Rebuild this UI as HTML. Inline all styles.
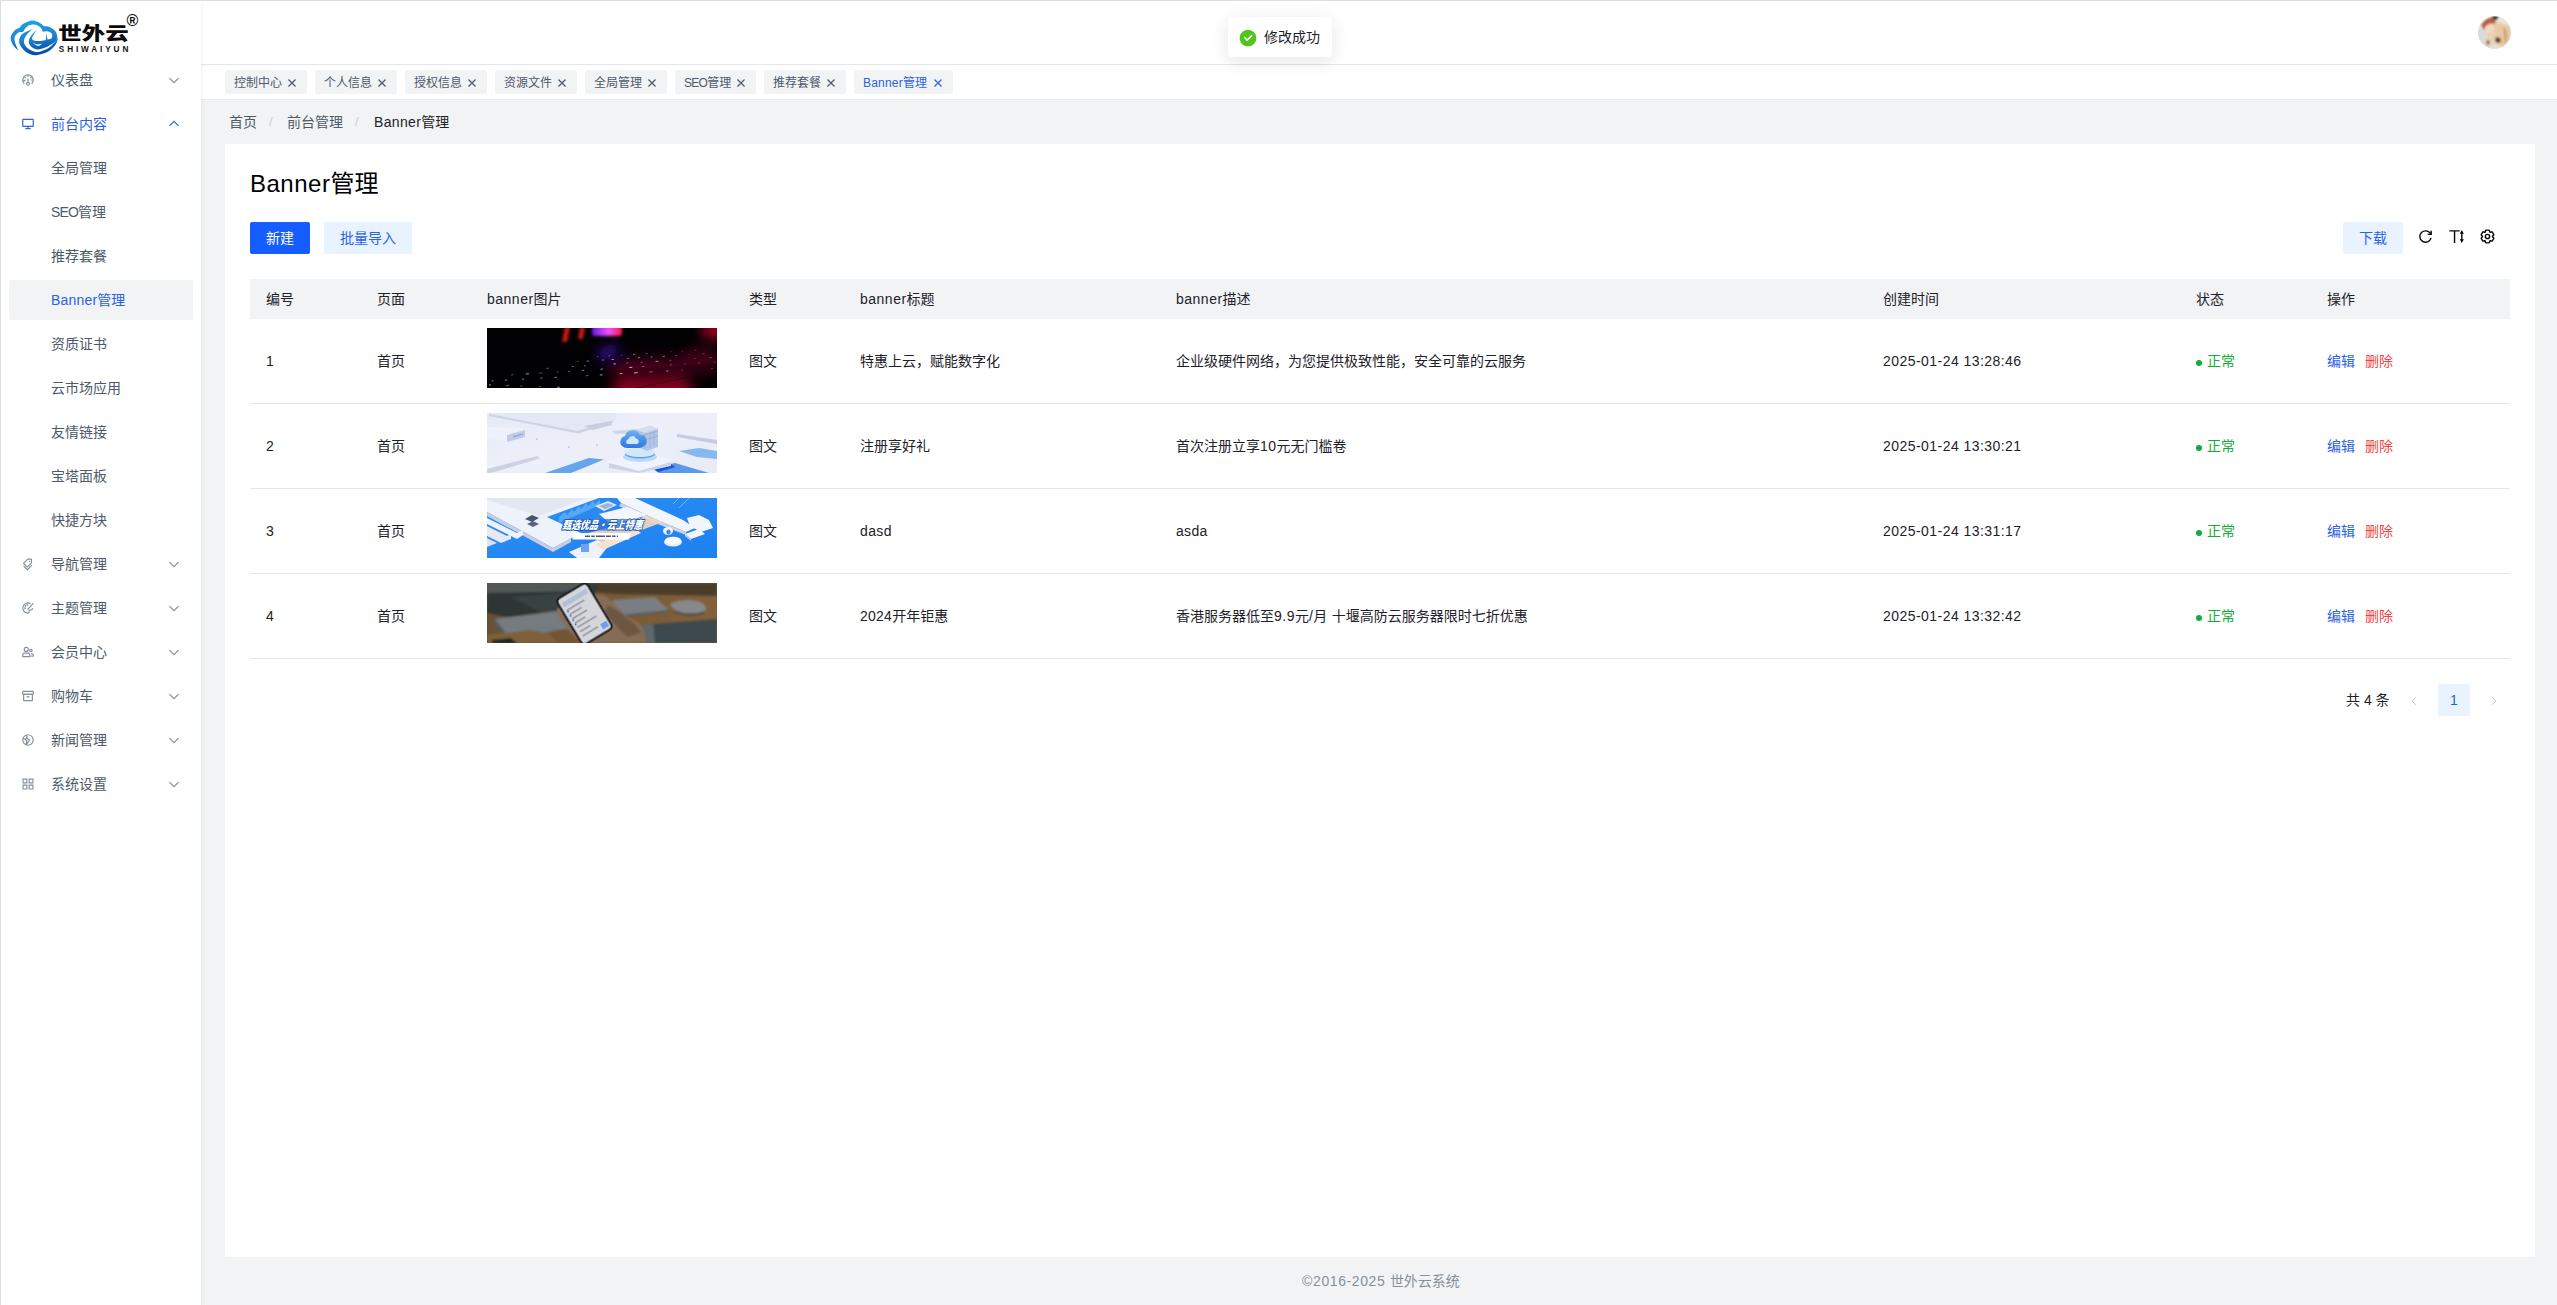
<!DOCTYPE html>
<html lang="zh-CN">
<head>
<meta charset="utf-8">
<title>Banner管理</title>
<style>
*{box-sizing:border-box;margin:0;padding:0}
html,body{width:2557px;height:1305px;overflow:hidden}
body{position:relative;background:#f2f3f5;font-family:"Liberation Sans","Noto Sans CJK SC",sans-serif;font-size:14px;color:#1d2129;line-height:22px}
.abs{position:absolute}
svg.ic{width:14px;height:14px;fill:none;stroke:currentColor;stroke-width:4;stroke-linecap:butt;stroke-linejoin:miter;display:block}
/* frame */
#btop{left:0;top:0;width:2557px;height:1px;background:#dedede;z-index:50}
#bleft{left:0;top:0;width:1px;height:1305px;background:#dedede;z-index:50}
/* sider */
#sider{left:1px;top:1px;width:200px;height:1304px;background:#fff;box-shadow:0 2px 5px rgba(0,0,0,.08);z-index:5}
.mi{position:absolute;left:8px;width:184px;height:40px;line-height:40px;border-radius:2px;color:#4e5969;font-size:14px;white-space:nowrap}
.mi .t{position:absolute;left:42px;top:0}
.mi .i{position:absolute;left:12px;top:13px;color:#86909c}
.mi .c{position:absolute;left:158px;top:13px;color:#86909c}
.mi.on{color:#2a62e4}
.mi.on .i,.mi.on .c{color:#2a62e4}
.mi.sel{background:#f2f3f5;color:#2a62e4}
/* header */
#header{left:201px;top:1px;width:2356px;height:64px;background:#fff;border-bottom:1px solid #e5e6eb}
#tabs{left:201px;top:65px;width:2356px;height:35px;background:#fff;border-bottom:1px solid #e9eaee}
.tag{position:absolute;top:5px;height:24px;line-height:25px;border:1px solid transparent;border-radius:2px;background:#f2f3f5;color:#4e5969;font-size:12px;padding:0 8px;white-space:nowrap}
.tag svg{position:absolute;right:8px;top:6px;width:12px;height:12px;stroke-width:5}
.tag.on{color:#2a62e4;background:#f2f3f5}
/* breadcrumb */
.bc{position:absolute;top:111px;height:22px;line-height:22px;font-size:14px;color:#4e5969;white-space:nowrap}
.bc.sep{color:#c9cdd4;font-size:13px}
.bc.cur{color:#1d2129}
/* card */
#card{left:225px;top:144px;width:2310px;height:1113px;background:#fff}
.btn{position:absolute;height:32px;line-height:32px;border-radius:2px;font-size:14px;text-align:center;white-space:nowrap}
.btn.pri{background:#165dff;color:#fff}
.btn.lt{background:#e8f3ff;color:#2a62e4}
#thead{left:250px;top:279px;width:2260px;height:40px;background:#f2f3f5}
.th{position:absolute;top:279px;height:40px;line-height:40px;color:#1d2129;white-space:nowrap}
.td{position:absolute;height:22px;line-height:22px;color:#1d2129;white-space:nowrap}
.rowline{position:absolute;left:250px;width:2260px;height:1px;background:#e5e6eb}
.img{position:absolute;left:487px;width:230px;height:60px;overflow:hidden}
.ok{color:#12ad38}
.ok i{position:absolute;left:0;top:10px;width:6px;height:6px;border-radius:50%;background:#12ad38}
.lk{color:#2a62e4}
.del{color:#ee4646}
#toast{left:1228px;top:17px;width:104px;height:40px;background:#fff;border-radius:4px;box-shadow:0 4px 18px rgba(0,0,0,.11);z-index:20}
svg.tb{position:absolute;top:228px;width:17px;height:17px;color:#07080a}
.ls5{letter-spacing:.5px}
.dt{letter-spacing:.45px}
</style>
</head>
<body>
<div id="btop" class="abs"></div>
<div id="bleft" class="abs"></div>
<div id="sider" class="abs">
<!--LOGO_S--><svg class="abs" style="left:4px;top:9px;width:140px;height:50px" viewBox="5 10 140 50">
<defs><linearGradient id="lg" gradientUnits="userSpaceOnUse" x1="30" y1="20" x2="36" y2="56"><stop offset="0" stop-color="#1da2e2"/><stop offset=".5" stop-color="#1b86d2"/><stop offset="1" stop-color="#0a43a2"/></linearGradient></defs>
<g fill="url(#lg)"><path d="M18.10 50.50C17.35 49.72 14.85 47.90 13.60 45.80C12.35 43.70 10.52 40.38 10.60 37.90C10.68 35.42 12.60 32.58 14.10 30.90C15.60 29.22 18.68 28.32 19.60 27.80C20.22 27.13 21.15 25.00 23.30 23.80C25.45 22.60 29.68 20.70 32.50 20.60C35.32 20.50 38.30 22.27 40.20 23.20C42.10 24.13 43.28 25.70 43.90 26.20C44.82 26.32 47.52 26.12 49.40 26.90C51.28 27.68 53.90 29.32 55.20 30.90C56.50 32.48 57.10 34.75 57.20 36.40C57.30 38.05 56.03 40.07 55.80 40.80C55.08 40.43 52.22 38.97 51.50 38.60C51.63 38.07 52.45 36.40 52.30 35.40C52.15 34.40 51.43 33.28 50.60 32.60C49.77 31.92 48.58 31.43 47.30 31.30C46.02 31.17 43.63 31.72 42.90 31.80C42.62 31.20 42.05 29.25 41.20 28.20C40.35 27.15 39.23 26.10 37.80 25.50C36.37 24.90 34.27 24.53 32.60 24.60C30.93 24.67 29.10 25.18 27.80 25.90C26.50 26.62 25.60 27.88 24.80 28.90C24.00 29.92 23.30 31.48 23.00 32.00C22.37 32.05 20.37 31.85 19.20 32.30C18.03 32.75 16.78 33.75 16.00 34.70C15.22 35.65 14.60 36.53 14.50 38.00C14.40 39.47 14.80 41.42 15.40 43.50C16.00 45.58 17.65 49.33 18.10 50.50Z"/><path d="M36.80 29.80C35.93 30.70 32.93 33.37 31.60 35.20C30.27 37.03 28.93 38.95 28.80 40.80C28.67 42.65 29.38 44.87 30.80 46.30C32.22 47.73 34.47 49.38 37.30 49.40C40.13 49.42 44.72 47.83 47.80 46.40C50.88 44.97 54.23 42.47 55.80 40.80C57.37 39.13 56.97 37.13 57.20 36.40C56.25 36.77 53.32 38.00 51.50 38.60C49.68 39.20 48.45 39.58 46.30 40.00C44.15 40.42 40.65 41.03 38.60 41.10C36.55 41.17 35.08 40.85 34.00 40.40C32.92 39.95 32.17 39.33 32.10 38.40C32.03 37.47 32.82 36.23 33.60 34.80C34.38 33.37 36.27 30.63 36.80 29.80Z"/><path d="M32.40 28.90C30.73 29.73 24.58 32.13 22.40 33.90C20.22 35.67 19.65 37.55 19.30 39.50C18.95 41.45 19.12 43.47 20.30 45.60C21.48 47.73 23.85 50.70 26.40 52.30C28.95 53.90 32.03 55.28 35.60 55.20C39.17 55.12 44.43 53.63 47.80 51.80C51.17 49.97 54.05 46.57 55.80 44.20C57.55 41.83 57.88 38.70 58.30 37.60C57.58 38.52 55.75 41.27 54.00 43.10C52.25 44.93 50.37 47.12 47.80 48.60C45.23 50.08 41.15 51.58 38.60 52.00C36.05 52.42 34.53 51.92 32.50 51.10C30.47 50.28 27.83 48.73 26.40 47.10C24.97 45.47 23.90 43.28 23.90 41.30C23.90 39.32 24.98 37.27 26.40 35.20C27.82 33.13 31.40 29.95 32.40 28.90Z"/><path d="M46.3 33.2 C46.8 36 47.3 38.5 47.6 40.2 L45.8 40.3 C46 38 46.1 36 46.3 33.2Z"/></g>
<path d="M32.50 42.80C33.25 43.05 35.32 44.18 37.00 44.30C38.68 44.42 41.67 43.63 42.60 43.50C41.83 43.92 39.68 46.12 38.00 46.00C36.32 45.88 33.42 43.33 32.50 42.80Z" fill="#d4f3ff"/>
<text x="58.300" y="39.800" font-family="'Noto Sans CJK SC','Liberation Sans',sans-serif" font-weight="900" font-size="17.800" textLength="70.500" lengthAdjust="spacingAndGlyphs" fill="#0a0a0a">世外云</text>
<text x="58.800" y="52.200" font-family="'Liberation Sans',sans-serif" font-weight="700" font-size="8.200" textLength="69.500" lengthAdjust="spacing" fill="#111">SHIWAIYUN</text>
<text x="126.400" y="26.400" font-family="'Liberation Sans',sans-serif" font-weight="700" font-size="16" fill="#111">®</text>
</svg><!--LOGO_E-->
<div class="mi " style="top:59px"><svg class="ic i" viewBox="0 0 48 48"><path d="M41.808 24c.118 4.63-1.486 9.333-5.21 13m5.21-13h-8.309m8.309 0c-.112-4.38-1.767-8.694-4.627-12M24 6c5.531 0 10.07 2.404 13.18 6M24 6c-5.724 0-10.384 2.574-13.5 6.38M24 6v7.5M37.18 12 31 17.5m-20.5-5.12L17 17.5m-6.5-5.12C6.99 16.662 5.44 22.508 6.53 28m4.872 9c-2.65-2.609-4.226-5.742-4.873-9m0 0 8.97-3.5"/><path d="M24 32a5 5 0 1 0 0 10 5 5 0 0 0 0-10Zm0 0V19"/></svg><span class="t">仪表盘</span><svg class="ic c" viewBox="0 0 48 48"><path d="M39.6 17.443 24.043 33 8.487 17.443"/></svg></div>
<div class="mi on" style="top:103px"><svg class="ic i" viewBox="0 0 48 48"><path d="M24 32v8m0 0h-9m9 0h9M7 32h34a1 1 0 0 0 1-1V9a1 1 0 0 0-1-1H7a1 1 0 0 0-1 1v22a1 1 0 0 0 1 1Z"/></svg><span class="t">前台内容</span><svg class="ic c" viewBox="0 0 48 48"><path d="M39.6 30.557 24.043 15 8.487 30.557"/></svg></div>
<div class="mi " style="top:147px"><span class="t">全局管理</span></div>
<div class="mi " style="top:191px"><span class="t"><span style="letter-spacing:-.85px">SEO</span>管理</span></div>
<div class="mi " style="top:235px"><span class="t">推荐套餐</span></div>
<div class="mi sel" style="top:279px"><span class="t"><span style="letter-spacing:.2px">Banner</span>管理</span></div>
<div class="mi " style="top:323px"><span class="t">资质证书</span></div>
<div class="mi " style="top:367px"><span class="t">云市场应用</span></div>
<div class="mi " style="top:411px"><span class="t">友情链接</span></div>
<div class="mi " style="top:455px"><span class="t">宝塔面板</span></div>
<div class="mi " style="top:499px"><span class="t">快捷方块</span></div>
<div class="mi " style="top:543px"><svg class="ic i" viewBox="0 0 48 48"><path d="M37.58 28.12 22.73 42.97a1 1 0 0 1-1.41 0L8.59 30.24"/><path d="M34.57 7.56 23.89 6.93a1 1 0 0 0-.77.3L9.3 21.05a1 1 0 0 0 0 1.42L20.6 33.78a1 1 0 0 0 1.42 0L35.85 19.95a1 1 0 0 0 .29-.76l-.63-10.69a1 1 0 0 0-.94-.94Z"/><circle cx="29" cy="15.500" r="2.300" fill="currentColor" stroke="none"/></svg><span class="t">导航管理</span><svg class="ic c" viewBox="0 0 48 48"><path d="M39.6 17.443 24.043 33 8.487 17.443"/></svg></div>
<div class="mi " style="top:587px"><svg class="ic i" viewBox="0 0 48 48"><path d="M33 9.200A17.500 17.500 0 1 0 23.500 41.500c2.800 0 4-1.600 4-4 0-2-1-3.200 0-4.800 1.800-2.800 6.500-1.200 9.500-3 1.600-1 3-2.800 3.600-5"/><path d="M22 29.500 43 7"/><circle cx="13.500" cy="25" r="1.300"/><circle cx="15.500" cy="17" r="1.300"/><circle cx="22" cy="12.500" r="1.300"/></svg><span class="t">主题管理</span><svg class="ic c" viewBox="0 0 48 48"><path d="M39.6 17.443 24.043 33 8.487 17.443"/></svg></div>
<div class="mi " style="top:631px"><svg class="ic i" viewBox="0 0 48 48"><circle cx="18" cy="15" r="7"/><circle cx="34" cy="19" r="4"/><path d="M6 34a6 6 0 0 1 6-6h12a6 6 0 0 1 6 6v6H6v-6ZM34 30h4a4 4 0 0 1 4 4v4h-8"/></svg><span class="t">会员中心</span><svg class="ic c" viewBox="0 0 48 48"><path d="M39.6 17.443 24.043 33 8.487 17.443"/></svg></div>
<div class="mi " style="top:675px"><svg class="ic i" viewBox="0 0 48 48"><rect x="9" y="18" width="30" height="22" rx="1"/><path d="M6 9a1 1 0 0 1 1-1h34a1 1 0 0 1 1 1v8a1 1 0 0 1-1 1H7a1 1 0 0 1-1-1V9ZM19 27h10"/></svg><span class="t">购物车</span><svg class="ic c" viewBox="0 0 48 48"><path d="M39.6 17.443 24.043 33 8.487 17.443"/></svg></div>
<div class="mi " style="top:719px"><svg class="ic i" viewBox="0 0 48 48"><path d="M15 21.500 6.704 19M15 21.500l4.683 5.152a1 1 0 0 1 .25.814L18 40.976l10.918-16.117a1 1 0 0 0-.298-1.409L21.500 19 15 21.500Zm0 0 6.062-6.995a1 1 0 0 0 .138-1.103L18 7.024"/><path d="M42 24c0 9.941-8.059 18-18 18S6 33.941 6 24 14.059 6 24 6s18 8.059 18 18Z"/></svg><span class="t">新闻管理</span><svg class="ic c" viewBox="0 0 48 48"><path d="M39.6 17.443 24.043 33 8.487 17.443"/></svg></div>
<div class="mi " style="top:763px"><svg class="ic i" viewBox="0 0 48 48"><path d="M7 7h13v13H7zM28 7h13v13H28zM7 28h13v13H7zM28 28h13v13H28z"/></svg><span class="t">系统设置</span><svg class="ic c" viewBox="0 0 48 48"><path d="M39.6 17.443 24.043 33 8.487 17.443"/></svg></div>
</div>
<div id="header" class="abs"></div>
<!--AV_S--><svg class="abs" style="left:2478px;top:16px;width:33px;height:33px;z-index:6" viewBox="0 0 33 33">
<defs><clipPath id="avc"><circle cx="16.500" cy="16.500" r="16.300"/></clipPath><filter id="avb" x="-20%" y="-20%" width="140%" height="140%"><feGaussianBlur stdDeviation="1.300"/></filter></defs>
<g clip-path="url(#avc)"><rect width="33" height="33" fill="#e6d2b8"/>
<g filter="url(#avb)">
<path d="M0 0 L33 0 L33 10 L20 6 L14 4 L6 10 L0 16Z" fill="#e9e6e2"/>
<path d="M3 9 Q8 0 18 1 L17 8 Q12 7 8 12 Q6 15 5 13Z" fill="#b4613c"/>
<path d="M14 0 L21 0 L19 4 L15 3Z" fill="#3a2a24"/>
<path d="M7 11 Q11 6 16 8 Q18 12 15 16 Q10 18 7 15Z" fill="#f2d6c2"/>
<path d="M0 14 L6 13 L9 20 L14 24 L12 33 L0 33Z" fill="#dcdad8"/>
<path d="M16 8 Q26 6 32 12 L33 26 Q28 32 22 31 Q18 26 17 20Z" fill="#e8c9a2"/>
<path d="M9 18 Q14 15 19 18 Q20 22 17 24 Q12 25 9 22Z" fill="#ecd0b4"/>
<path d="M17 22 Q20 20 23 23 Q23 27 20 27 Q17 26 17 22Z" fill="#5c4030"/>
<path d="M9 24 l3 1 -1 4 -3 -1z" fill="#b4502c"/>
<path d="M27 12 q3 6 1 14 l-2 0 q1 -8 -1 -13z" fill="#c99c72"/>
<path d="M12 30 Q18 27 24 31 L24 33 L12 33Z" fill="#e4e2e0"/>
</g></g></svg><!--AV_E-->
<div id="tabs" class="abs">
<div class="tag" style="left:24px;width:82px">控制中心<svg class="ic" viewBox="0 0 48 48"><path d="M9.857 9.858 24 24m0 0 14.142 14.142M24 24 38.142 9.858M24 24 9.857 38.142"/></svg></div>
<div class="tag" style="left:114px;width:82px">个人信息<svg class="ic" viewBox="0 0 48 48"><path d="M9.857 9.858 24 24m0 0 14.142 14.142M24 24 38.142 9.858M24 24 9.857 38.142"/></svg></div>
<div class="tag" style="left:204px;width:82px">授权信息<svg class="ic" viewBox="0 0 48 48"><path d="M9.857 9.858 24 24m0 0 14.142 14.142M24 24 38.142 9.858M24 24 9.857 38.142"/></svg></div>
<div class="tag" style="left:294px;width:82px">资源文件<svg class="ic" viewBox="0 0 48 48"><path d="M9.857 9.858 24 24m0 0 14.142 14.142M24 24 38.142 9.858M24 24 9.857 38.142"/></svg></div>
<div class="tag" style="left:384px;width:82px">全局管理<svg class="ic" viewBox="0 0 48 48"><path d="M9.857 9.858 24 24m0 0 14.142 14.142M24 24 38.142 9.858M24 24 9.857 38.142"/></svg></div>
<div class="tag" style="left:474px;width:81px"><span style="letter-spacing:-.7px">SEO</span>管理<svg class="ic" viewBox="0 0 48 48"><path d="M9.857 9.858 24 24m0 0 14.142 14.142M24 24 38.142 9.858M24 24 9.857 38.142"/></svg></div>
<div class="tag" style="left:563px;width:82px">推荐套餐<svg class="ic" viewBox="0 0 48 48"><path d="M9.857 9.858 24 24m0 0 14.142 14.142M24 24 38.142 9.858M24 24 9.857 38.142"/></svg></div>
<div class="tag on" style="left:653px;width:99px"><span style="letter-spacing:.2px">Banner</span>管理<svg class="ic" viewBox="0 0 48 48"><path d="M9.857 9.858 24 24m0 0 14.142 14.142M24 24 38.142 9.858M24 24 9.857 38.142"/></svg></div>
</div>
<div class="bc" style="left:229px">首页</div>
<div class="bc sep" style="left:269px">/</div>
<div class="bc" style="left:287px">前台管理</div>
<div class="bc sep" style="left:355px">/</div>
<div class="bc cur" style="left:374px"><span style="letter-spacing:.35px">Banner</span>管理</div>
<div id="card" class="abs"></div>
<h1 class="abs" id="title" style="left:250px;top:167px;font-size:24px;line-height:34px;font-weight:400;color:#000;white-space:nowrap"><span style="letter-spacing:.5px">Banner</span>管理</h1>
<div class="btn pri" style="left:250px;top:222px;width:60px">新建</div>
<div class="btn lt" style="left:324px;top:222px;width:88px">批量导入</div>
<div class="btn lt" style="left:2343px;top:222px;width:60px">下载</div>
<svg class="ic tb" style="left:2417px" viewBox="0 0 48 48"><path d="M38.837 18C36.463 12.136 30.715 8 24 8 15.163 8 8 15.163 8 24s7.163 16 16 16c7.455 0 13.72-5.1 15.496-12M40 8v10H30"/></svg>
<svg class="ic tb" style="left:2448px" viewBox="0 0 48 48"><path d="M4 8h29M18.500 8v34M39 13v22"/><path d="M39 5.500l5.800 10.500h-11.600zM39 42.500l5.800-10.500h-11.600z" fill="currentColor" stroke="none"/></svg>
<svg class="ic tb" style="left:2479px" viewBox="0 0 48 48"><path d="M18.797 6.732A1 1 0 0 1 19.76 6h8.48a1 1 0 0 1 .964.732l1.285 4.628a1 1 0 0 0 1.213.7l4.651-1.2a1 1 0 0 1 1.116.468l4.24 7.344a1 1 0 0 1-.153 1.2L38.193 23.3a1 1 0 0 0 0 1.402l3.364 3.427a1 1 0 0 1 .153 1.2l-4.24 7.344a1 1 0 0 1-1.116.468l-4.65-1.2a1 1 0 0 0-1.214.7l-1.285 4.628a1 1 0 0 1-.964.732h-8.48a1 1 0 0 1-.963-.732L17.51 36.64a1 1 0 0 0-1.213-.7l-4.65 1.2a1 1 0 0 1-1.116-.468l-4.24-7.344a1 1 0 0 1 .153-1.2L9.809 24.7a1 1 0 0 0 0-1.402l-3.364-3.427a1 1 0 0 1-.153-1.2l4.24-7.344a1 1 0 0 1 1.116-.468l4.65 1.2a1 1 0 0 0 1.213-.7l1.286-4.628Z"/><path d="M30 24a6 6 0 1 1-12 0 6 6 0 0 1 12 0Z"/></svg>
<div id="thead" class="abs"></div>
<div class="th" style="left:266px">编号</div>
<div class="th" style="left:377px">页面</div>
<div class="th" style="left:487px"><span class="ls5">banner</span>图片</div>
<div class="th" style="left:749px">类型</div>
<div class="th" style="left:860px"><span class="ls5">banner</span>标题</div>
<div class="th" style="left:1176px"><span class="ls5">banner</span>描述</div>
<div class="th" style="left:1883px">创建时间</div>
<div class="th" style="left:2196px">状态</div>
<div class="th" style="left:2327px">操作</div>
<div class="td" style="left:266px;top:350px">1</div>
<div class="td" style="left:377px;top:350px">首页</div>
<div class="img" style="top:328px"><!--IMG1S--><svg width="230" height="60" viewBox="0 0 230 60" style="display:block">
<defs><filter id="b1" x="-30%" y="-30%" width="160%" height="160%"><feGaussianBlur stdDeviation="1.6"/></filter><filter id="b2" x="-30%" y="-30%" width="160%" height="160%"><feGaussianBlur stdDeviation="6"/></filter><filter id="b3"><feGaussianBlur stdDeviation=".45"/></filter>
<linearGradient id="pg" x1="0" y1="0" x2="1" y2="0"><stop offset="0" stop-color="#6a18e8"/><stop offset=".55" stop-color="#f050ff"/><stop offset="1" stop-color="#ff1840"/></linearGradient></defs>
<rect width="230" height="60" fill="#020103"/>
<g filter="url(#b2)"><ellipse cx="165" cy="64" rx="42" ry="17" fill="#b8052a"/><ellipse cx="228" cy="2" rx="14" ry="9" fill="#a00424"/><ellipse cx="165" cy="42" rx="45" ry="12" fill="#48061f"/><ellipse cx="121" cy="24" rx="12" ry="4" fill="#4a14c8" transform="rotate(-18 121 24)"/><ellipse cx="212" cy="34" rx="22" ry="14" fill="#3c0316"/></g>
<g filter="url(#b1)"><rect x="105" y="-3" width="30" height="11" rx="3" fill="url(#pg)"/><path d="M78 -1 L83 -1 L80 14 L75 14Z" fill="#d01414"/><path d="M93 -1 L98 -1 L96 11 L91 11Z" fill="#c81212"/></g>
<path d="M0 50 L230 36 L230 60 L0 60Z" fill="#000" opacity=".25"/>
<g filter="url(#b3)"><rect x="2.0" y="56.5" width="2.0" height="1.1" fill="#6fc6d6" opacity="0.78" transform="rotate(-5 2.0 56.5)"/><rect x="19.0" y="57.1" width="2.9" height="1.1" fill="#6fc6d6" opacity="0.48" transform="rotate(-5 19.0 57.1)"/><rect x="33.4" y="57.6" width="2.0" height="1.1" fill="#6fc6d6" opacity="0.48" transform="rotate(-5 33.4 57.6)"/><rect x="52.2" y="58.2" width="2.3" height="1.1" fill="#6fc6d6" opacity="0.51" transform="rotate(-5 52.2 58.2)"/><rect x="70.1" y="58.8" width="2.6" height="1.1" fill="#6fc6d6" opacity="0.74" transform="rotate(-5 70.1 58.8)"/><rect x="105.0" y="60.0" width="2.1" height="1.1" fill="#aab8e6" opacity="0.52" transform="rotate(-5 105.0 60.0)"/><rect x="119.0" y="60.5" width="3.0" height="1.1" fill="#f0c0e0" opacity="0.54" transform="rotate(-5 119.0 60.5)"/><rect x="4.7" y="52.5" width="1.8" height="1.0" fill="#6fc6d6" opacity="0.72" transform="rotate(-5 4.7 52.5)"/><rect x="17.8" y="51.7" width="2.5" height="1.0" fill="#6fc6d6" opacity="0.79" transform="rotate(-5 17.8 51.7)"/><rect x="34.8" y="50.8" width="2.3" height="1.0" fill="#6fc6d6" opacity="0.68" transform="rotate(-5 34.8 50.8)"/><rect x="53.0" y="49.7" width="2.8" height="1.0" fill="#6fc6d6" opacity="0.57" transform="rotate(-5 53.0 49.7)"/><rect x="67.5" y="48.9" width="2.2" height="1.0" fill="#6fc6d6" opacity="0.81" transform="rotate(-5 67.5 48.9)"/><rect x="98.8" y="47.2" width="2.6" height="1.0" fill="#aab8e6" opacity="0.53" transform="rotate(-5 98.8 47.2)"/><rect x="112.8" y="46.4" width="2.8" height="1.0" fill="#aab8e6" opacity="0.83" transform="rotate(-5 112.8 46.4)"/><rect x="132.6" y="45.3" width="2.8" height="1.0" fill="#f0c0e0" opacity="0.80" transform="rotate(-5 132.6 45.3)"/><rect x="147.1" y="44.4" width="3.5" height="1.0" fill="#f0c0e0" opacity="0.87" transform="rotate(-5 147.1 44.4)"/><rect x="162.4" y="43.6" width="3.0" height="1.0" fill="#f0c0e0" opacity="0.48" transform="rotate(-5 162.4 43.6)"/><rect x="179.1" y="42.6" width="2.2" height="1.0" fill="#e08aa0" opacity="0.86" transform="rotate(-5 179.1 42.6)"/><rect x="193.7" y="41.8" width="2.6" height="1.0" fill="#e08aa0" opacity="0.28" transform="rotate(-5 193.7 41.8)"/><rect x="223.9" y="40.1" width="2.2" height="1.0" fill="#e08aa0" opacity="0.31" transform="rotate(-5 223.9 40.1)"/><rect x="24.0" y="46.5" width="2.3" height="0.9" fill="#6fc6d6" opacity="0.49" transform="rotate(-5 24.0 46.5)"/><rect x="38.8" y="45.6" width="3.1" height="0.9" fill="#6fc6d6" opacity="0.86" transform="rotate(-5 38.8 45.6)"/><rect x="52.2" y="44.7" width="3.1" height="0.9" fill="#6fc6d6" opacity="0.63" transform="rotate(-5 52.2 44.7)"/><rect x="69.7" y="43.6" width="1.9" height="0.9" fill="#6fc6d6" opacity="0.54" transform="rotate(-5 69.7 43.6)"/><rect x="81.1" y="42.9" width="2.0" height="0.9" fill="#aab8e6" opacity="0.74" transform="rotate(-5 81.1 42.9)"/><rect x="94.7" y="42.0" width="2.5" height="0.9" fill="#aab8e6" opacity="0.63" transform="rotate(-5 94.7 42.0)"/><rect x="113.4" y="40.8" width="2.6" height="0.9" fill="#aab8e6" opacity="0.71" transform="rotate(-5 113.4 40.8)"/><rect x="142.3" y="39.0" width="2.9" height="0.9" fill="#f0c0e0" opacity="0.89" transform="rotate(-5 142.3 39.0)"/><rect x="154.7" y="38.2" width="2.7" height="0.9" fill="#f0c0e0" opacity="0.50" transform="rotate(-5 154.7 38.2)"/><rect x="183.0" y="36.4" width="1.6" height="0.9" fill="#e08aa0" opacity="0.62" transform="rotate(-5 183.0 36.4)"/><rect x="196.7" y="35.5" width="2.2" height="0.9" fill="#e08aa0" opacity="0.30" transform="rotate(-5 196.7 35.5)"/><rect x="211.4" y="34.6" width="1.8" height="0.9" fill="#e08aa0" opacity="0.45" transform="rotate(-5 211.4 34.6)"/><rect x="226.9" y="33.6" width="1.8" height="0.9" fill="#e08aa0" opacity="0.38" transform="rotate(-5 226.9 33.6)"/><rect x="59.4" y="39.9" width="2.2" height="0.8" fill="#6fc6d6" opacity="0.68" transform="rotate(-5 59.4 39.9)"/><rect x="84.7" y="38.3" width="1.7" height="0.8" fill="#aab8e6" opacity="0.86" transform="rotate(-5 84.7 38.3)"/><rect x="97.0" y="37.5" width="1.6" height="0.8" fill="#aab8e6" opacity="0.71" transform="rotate(-5 97.0 37.5)"/><rect x="126.4" y="35.6" width="2.5" height="0.8" fill="#f0c0e0" opacity="0.88" transform="rotate(-5 126.4 35.6)"/><rect x="139.0" y="34.8" width="2.6" height="0.8" fill="#f0c0e0" opacity="0.53" transform="rotate(-5 139.0 34.8)"/><rect x="153.8" y="33.9" width="1.8" height="0.8" fill="#f0c0e0" opacity="0.61" transform="rotate(-5 153.8 33.9)"/><rect x="168.6" y="32.9" width="2.7" height="0.8" fill="#f0c0e0" opacity="0.88" transform="rotate(-5 168.6 32.9)"/><rect x="182.3" y="32.0" width="2.2" height="0.8" fill="#e08aa0" opacity="0.56" transform="rotate(-5 182.3 32.0)"/><rect x="206.4" y="30.5" width="2.5" height="0.8" fill="#e08aa0" opacity="0.35" transform="rotate(-5 206.4 30.5)"/><rect x="222.0" y="29.5" width="3.0" height="0.8" fill="#e08aa0" opacity="0.55" transform="rotate(-5 222.0 29.5)"/><rect x="89.7" y="33.4" width="1.6" height="0.7" fill="#aab8e6" opacity="0.56" transform="rotate(-5 89.7 33.4)"/><rect x="99.5" y="32.8" width="2.6" height="0.7" fill="#aab8e6" opacity="0.76" transform="rotate(-5 99.5 32.8)"/><rect x="114.7" y="31.8" width="2.4" height="0.7" fill="#aab8e6" opacity="0.78" transform="rotate(-5 114.7 31.8)"/><rect x="124.5" y="31.2" width="2.4" height="0.7" fill="#f0c0e0" opacity="0.90" transform="rotate(-5 124.5 31.2)"/><rect x="139.8" y="30.2" width="2.4" height="0.7" fill="#f0c0e0" opacity="0.54" transform="rotate(-5 139.8 30.2)"/><rect x="150.9" y="29.5" width="1.8" height="0.7" fill="#f0c0e0" opacity="0.94" transform="rotate(-5 150.9 29.5)"/><rect x="163.8" y="28.7" width="1.5" height="0.7" fill="#f0c0e0" opacity="0.81" transform="rotate(-5 163.8 28.7)"/><rect x="175.5" y="28.0" width="2.4" height="0.7" fill="#e08aa0" opacity="0.90" transform="rotate(-5 175.5 28.0)"/><rect x="188.3" y="27.2" width="2.2" height="0.7" fill="#e08aa0" opacity="0.56" transform="rotate(-5 188.3 27.2)"/><rect x="201.7" y="26.3" width="1.3" height="0.7" fill="#e08aa0" opacity="0.31" transform="rotate(-5 201.7 26.3)"/><rect x="215.0" y="25.5" width="2.6" height="0.7" fill="#e08aa0" opacity="0.43" transform="rotate(-5 215.0 25.5)"/><rect x="110.0" y="28.5" width="1.3" height="0.6" fill="#aab8e6" opacity="0.86" transform="rotate(-5 110.0 28.5)"/><rect x="121.3" y="27.7" width="1.8" height="0.6" fill="#f0c0e0" opacity="0.57" transform="rotate(-5 121.3 27.7)"/><rect x="133.6" y="26.9" width="2.1" height="0.6" fill="#f0c0e0" opacity="0.52" transform="rotate(-5 133.6 26.9)"/><rect x="146.2" y="26.1" width="2.1" height="0.6" fill="#f0c0e0" opacity="0.74" transform="rotate(-5 146.2 26.1)"/><rect x="158.7" y="25.3" width="1.7" height="0.6" fill="#f0c0e0" opacity="0.70" transform="rotate(-5 158.7 25.3)"/><rect x="183.3" y="23.6" width="2.0" height="0.6" fill="#e08aa0" opacity="0.45" transform="rotate(-5 183.3 23.6)"/><rect x="194.5" y="22.9" width="1.7" height="0.6" fill="#e08aa0" opacity="0.49" transform="rotate(-5 194.5 22.9)"/><rect x="207.4" y="22.0" width="2.0" height="0.6" fill="#e08aa0" opacity="0.44" transform="rotate(-5 207.4 22.0)"/></g>
<path d="M150 60 L230 43" stroke="#30020c" stroke-width="1" opacity=".8"/>
</svg><!--IMG1E--></div>
<div class="td" style="left:749px;top:350px">图文</div>
<div class="td" style="left:860px;top:350px">特惠上云，赋能数字化</div>
<div class="td" style="left:1176px;top:350px">企业级硬件网络，为您提供极致性能，安全可靠的云服务</div>
<div class="td" style="left:1883px;top:350px"><span class="dt">2025-01-24 13:28:46</span></div>
<div class="td ok" style="left:2196px;top:350px;padding-left:11px"><i></i>正常</div>
<div class="td lk" style="left:2327px;top:350px">编辑</div>
<div class="td del" style="left:2365px;top:350px">删除</div>
<div class="rowline" style="top:403px"></div>
<div class="td" style="left:266px;top:435px">2</div>
<div class="td" style="left:377px;top:435px">首页</div>
<div class="img" style="top:413px"><!--IMG2S--><svg width="230" height="60" viewBox="0 0 230 60" style="display:block">
<defs><linearGradient id="g2" x1="0" y1="0" x2="1" y2="1"><stop offset="0" stop-color="#e6eaf6"/><stop offset=".5" stop-color="#edf0f9"/><stop offset="1" stop-color="#e6ebf7"/></linearGradient><filter id="b4"><feGaussianBlur stdDeviation=".5"/></filter>
<linearGradient id="cl" x1="0" y1="0" x2="0" y2="1"><stop offset="0" stop-color="#6fb0f2"/><stop offset="1" stop-color="#2a78e0"/></linearGradient></defs>
<rect width="230" height="60" fill="url(#g2)"/>
<g filter="url(#b4)">
<path d="M0 0 L130 0 L128 8 L92 19 L0 1Z" fill="#e4e8f4"/>
<path d="M2 1 L90 18 L126 8 L126 9.500 L91 20.500 L2 3Z" fill="#cdd3e5"/>
<path d="M97 13 L124 8 L125 12 L106 17Z" fill="#c8cee2"/>
<path d="M0 14 L36 15 L38 23 L20 29 L0 25Z" fill="#eef1fa"/>
<path d="M20 22 L38 17 L38 24 L20 29Z" fill="#c4cbe2"/>
<path d="M26 24 L36 21" stroke="#8fb0ec" stroke-width="1.500"/>
<path d="M0 56 L50 43 L53 45.500 L4 60 L0 60Z" fill="#ccd2e4"/>
<path d="M58 60 L102 45 L117 46.500 L84 60Z" fill="#66a4ec"/>
<path d="M190 15 L230 17 L230 28 L190 22Z" fill="#eceff9"/>
<path d="M190 21 L230 27 L230 31 L190 24Z" fill="#c5cbe0"/>
<path d="M125 18 L150 16 L150 20 L128 21Z" fill="#d0d5e8"/>
<path d="M192 38 L212 35 L230 38 L230 46 L210 44Z" fill="#86b8f0"/>
<path d="M165 55 L188 50 L222 60 L172 60Z" fill="#5a98ea"/>
<path d="M165 55 L184 51 L188 54 L171 59Z" fill="#1c50d6"/>
<path d="M122 48 L152 38 L184 46 L184 52 L152 60 L122 54Z" fill="#f0f3fb"/>
<path d="M122 50 L152 58 L184 49 L184 53 L152 60 L122 55Z" fill="#cdd4e8"/>
<ellipse cx="153" cy="44" rx="17" ry="5" fill="#bcd9f8"/>
<ellipse cx="153" cy="41" rx="15" ry="4.500" fill="#5da2ee"/>
<ellipse cx="153" cy="39.500" rx="15" ry="4.500" fill="#d5e8fb"/>
<path d="M149 17 L163 13 L171 16 L171 34 L160 38 L149 33Z" fill="#b4c6e6"/>
<path d="M149 17 L163 13 L171 16 L158 20Z" fill="#d2ddf2"/>
<path d="M153 21v14M158 22v14M163 20v15M167 18v15M150 24l21-6M150 29l21-6" stroke="#8fa9d8" stroke-width=".7" fill="none"/>
<path d="M135 33 a6 6 0 0 1 3-10 a8 8 0 0 1 15-1 a6 6 0 0 1 4 11 q-2 2-6 2 h-11 q-3 0-5-2Z" fill="url(#cl)"/>
<path d="M140 31 a3 3 0 0 1 1.500-5 a4 4 0 0 1 7.500-.5 a3 3 0 0 1 1.500 5.500 z" fill="#cfe6fc"/>
</g>
<circle cx="50" cy="26" r=".8" fill="#7ab0ee"/><circle cx="82" cy="34" r=".8" fill="#7ab0ee"/><circle cx="110" cy="32" r=".8" fill="#7ab0ee"/>
</svg><!--IMG2E--></div>
<div class="td" style="left:749px;top:435px">图文</div>
<div class="td" style="left:860px;top:435px">注册享好礼</div>
<div class="td" style="left:1176px;top:435px">首次注册立享<span class="ls5">10</span>元无门槛卷</div>
<div class="td" style="left:1883px;top:435px"><span class="dt">2025-01-24 13:30:21</span></div>
<div class="td ok" style="left:2196px;top:435px;padding-left:11px"><i></i>正常</div>
<div class="td lk" style="left:2327px;top:435px">编辑</div>
<div class="td del" style="left:2365px;top:435px">删除</div>
<div class="rowline" style="top:488px"></div>
<div class="td" style="left:266px;top:520px">3</div>
<div class="td" style="left:377px;top:520px">首页</div>
<div class="img" style="top:498px"><!--IMG3S--><svg width="230" height="60" viewBox="0 0 230 60" style="display:block">
<defs><linearGradient id="g3" x1="0" y1="0" x2="1" y2="1"><stop offset="0" stop-color="#2f90f4"/><stop offset="1" stop-color="#1c80f0"/></linearGradient><filter id="b5"><feGaussianBlur stdDeviation=".6"/></filter></defs>
<rect width="230" height="60" fill="url(#g3)"/>
<g filter="url(#b5)">
<path d="M0 0 L112 0 L60 19 L94 35 L66 50 L0 14Z" fill="#eef2fa"/>
<path d="M0 0 L100 0 L52 18 L0 2Z" fill="#e3e7f2"/>
<path d="M0 14 L66 50 L84 40 L84 44 L66 54 L0 18Z" fill="#c6cee4"/>
<path d="M0 20 L30 35 L36 32 L36 37 L30 41 L0 26Z" fill="#eef2fa"/>
<path d="M0 28 L20 38 L24 36 L24 41 L14 45 L0 38Z" fill="#e6eaf6"/>
<path d="M0 40 L10 45 L0 49Z" fill="#dde3f2"/>
<path d="M38 21 L45 17 L52 20 L45 24Z" fill="#4a5468"/><path d="M40 26 L46 23 L52 26 L46 29Z" fill="#5a6680"/>
<path d="M68 20 L108 4 L112 0 L150 0 L120 14 L95 30Z" fill="#2c8af0"/>
<path d="M72 19 l6-5 2 3 5-6 2 3 5-6 2 3 5-6 2 3 5-5 2 3 5-5 v6 l-41 18z" fill="#63aef6" opacity=".8"/>
<path d="M108 8 L121 3 L130 7 L117 13Z" fill="#dfe6f4"/><path d="M112 8 L121 5 L127 7.500 L118 11Z" fill="#9fb4d6"/>
<path d="M130 0 L148 0 L196 22 L208 30 L199 34 L170 22 L134 5Z" fill="#f2f5fc"/>
<path d="M134 5 L170 22 L199 34 L199 37 L168 25 L132 8Z" fill="#c9d3ea"/>
<path d="M112 16 L140 9 L160 17 L126 28Z" fill="#f4f6fc"/>
<path d="M98 36 L160 18 L176 24 L118 46Z" fill="#f3d6c0" opacity=".9"/>
<path d="M82 54 L110 42 L122 47 L112 60 L90 60Z" fill="#eef2fa"/><path d="M94 46 h8 v8 h-8z" fill="#6aa2ee"/>
<path d="M108 46 L150 32 L154 35 L116 52Z" fill="#f6e2d2"/>
<path d="M200 20 L212 17 L222 22 L226 30 L214 34 L203 28Z" fill="#f2f5fc"/>
<path d="M198 36 L212 31 L218 36 L204 41Z" fill="#f2f5fc"/><path d="M198 36 L204 41 L204 43 L198 38Z" fill="#c6d0e6"/>
<ellipse cx="186" cy="44" rx="9" ry="4.500" fill="#e9eef8"/><ellipse cx="186" cy="42.500" rx="8" ry="3.800" fill="#fbfcff"/>
<ellipse cx="181" cy="33" rx="5" ry="4" fill="#f2f5fc"/><ellipse cx="181.500" cy="34" rx="2.200" ry="2.500" fill="#3b86e8"/>
<path d="M186 6 l6-6 M192 10 l10-10" stroke="#8cc4fa" stroke-width="1" opacity=".7"/>
</g>
<path d="M77 21 L158 21 L155 32.500 L74 32.500Z" fill="#2b74dc" opacity=".75"/>
<rect x="86" y="35" width="57" height="6.500" rx="1" fill="#fff" transform="skewX(-12)" style="transform-origin:114px 38px"/>
<path d="M98 38.300h33" stroke="#2a3a5e" stroke-width="1.600" stroke-dasharray="5 1.200 3.500 1.200 9 1" opacity=".85"/>
<text x="115.500" y="31.200" text-anchor="middle" font-family="'Noto Sans CJK SC','Liberation Sans',sans-serif" font-size="11.200" font-weight="900" font-style="italic" fill="#fff" stroke="#1c55b4" stroke-width="1.700" paint-order="stroke" stroke-linejoin="round" textLength="80" lengthAdjust="spacingAndGlyphs" transform="skewX(-8)" style="transform-origin:115px 28px">甄选优品·云上特惠</text>
</svg><!--IMG3E--></div>
<div class="td" style="left:749px;top:520px">图文</div>
<div class="td" style="left:860px;top:520px"><span style="letter-spacing:.4px">dasd</span></div>
<div class="td" style="left:1176px;top:520px"><span style="letter-spacing:.3px">asda</span></div>
<div class="td" style="left:1883px;top:520px"><span class="dt">2025-01-24 13:31:17</span></div>
<div class="td ok" style="left:2196px;top:520px;padding-left:11px"><i></i>正常</div>
<div class="td lk" style="left:2327px;top:520px">编辑</div>
<div class="td del" style="left:2365px;top:520px">删除</div>
<div class="rowline" style="top:573px"></div>
<div class="td" style="left:266px;top:605px">4</div>
<div class="td" style="left:377px;top:605px">首页</div>
<div class="img" style="top:583px"><!--IMG4S--><svg width="230" height="60" viewBox="0 0 230 60" style="display:block">
<defs><linearGradient id="g4" x1="0" y1="0" x2="1" y2="0"><stop offset="0" stop-color="#9a7040"/><stop offset=".5" stop-color="#b07c46"/><stop offset="1" stop-color="#c08a4c"/></linearGradient><filter id="b6"><feGaussianBlur stdDeviation=".8"/></filter><filter id="b7"><feGaussianBlur stdDeviation=".35"/></filter></defs>
<rect width="230" height="60" fill="url(#g4)"/>
<g filter="url(#b6)">
<path d="M0 0 L230 0 L230 13 L130 11 L100 9 L0 10Z" fill="#6a5236"/><path d="M0 0 L112 0 L108 10 L0 10Z" fill="#4a4e4c"/>
<path d="M0 0 L100 0 L100 9 L0 10Z" fill="#767a7a"/>
<path d="M0 10 L96 8 L110 12 L86 30 L20 34 L0 30Z" fill="#3c4442"/>
<path d="M24 14 L84 10 L90 26 L60 32Z" fill="#505a58"/>
<path d="M8 36 L86 26 L112 40 L44 52 L20 52Z" fill="#aeb2b8"/>
<path d="M8 36 L20 52 L44 52 L46 54 L18 55 L5 38Z" fill="#7c8088"/>
<path d="M125 17 L168 14 L182 27 L134 32Z" fill="#b4b8bc"/>
<path d="M134 32 L182 27 L182 29 L135 34Z" fill="#7e8288"/>
<path d="M184 20 Q196 15 210 18 Q222 22 218 28 Q204 33 190 28 Q182 24 184 20Z" fill="#c6c9cc"/>
<path d="M186 27 Q204 34 218 28 L218 30 Q204 36 187 29Z" fill="#70665a"/>
<path d="M0 52 L44 47 L62 50 L70 60 L0 60Z" fill="#b98a50"/>
<path d="M4 57 L24 55 L30 60 L6 60Z" fill="#2a2a2a"/>
<path d="M156 42 L230 36 L230 60 L158 60Z" fill="#56656c"/>
<path d="M156 42 L166 41 L168 60 L158 60Z" fill="#8a949a"/>
<path d="M106 12 Q118 10 124 18 L140 34 Q160 40 158 60 L96 60 Q82 50 78 42 L70 30 Q72 26 80 28 L92 40 Z" fill="#c89c76"/>
<path d="M70 27 Q72 23 78 24 L84 30 L76 32Z" fill="#d2a882"/>
<path d="M120 22 Q132 26 138 34 Q150 40 154 50 L140 54 Q126 40 118 30Z" fill="#a27a58"/>
</g>
<rect width="230" height="60" fill="#14181c" opacity=".36"/>
<g filter="url(#b7)" transform="rotate(-31 97 30)">
<rect x="78.500" y="3.500" width="37" height="55" rx="5" fill="#15171a"/>
<rect x="80.500" y="5.500" width="33" height="51" rx="3.500" fill="#d4d6da"/>
<rect x="83" y="10" width="28" height="5" fill="#b4c0d8"/>
<path d="M84 19h20M84 24h14M84 29h17M84 34h12M84 39h22M84 44h12M84 49h18" stroke="#6a7282" stroke-width="1"/>
<path d="M83 20.500h2M83 25.500h2M83 30.500h2M83 35.500h2" stroke="#3a66d8" stroke-width="1.400"/>
<rect x="105" y="48" width="7" height="6" fill="#6aa0ee"/>
</g>
</svg><!--IMG4E--></div>
<div class="td" style="left:749px;top:605px">图文</div>
<div class="td" style="left:860px;top:605px"><span style="letter-spacing:.25px">2024</span>开年钜惠</div>
<div class="td" style="left:1176px;top:605px">香港服务器低至<span class="ls5">9.9</span>元<span class="ls5">/</span>月<span class="ls5"> </span>十堰高防云服务器限时七折优惠</div>
<div class="td" style="left:1883px;top:605px"><span class="dt">2025-01-24 13:32:42</span></div>
<div class="td ok" style="left:2196px;top:605px;padding-left:11px"><i></i>正常</div>
<div class="td lk" style="left:2327px;top:605px">编辑</div>
<div class="td del" style="left:2365px;top:605px">删除</div>
<div class="rowline" style="top:658px"></div>
<div class="td" style="left:2346px;top:689px">共 4 条</div>
<svg class="ic abs" style="left:2408px;top:695px;width:12px;height:12px;color:#c9cdd4" viewBox="0 0 48 48"><path d="M32 8.4 16.444 23.956 32 39.513"/></svg>
<div class="abs" style="left:2438px;top:684px;width:32px;height:32px;line-height:32px;text-align:center;background:#e8f3ff;color:#2a62e4;border-radius:2px">1</div>
<svg class="ic abs" style="left:2488px;top:695px;width:12px;height:12px;color:#c9cdd4" viewBox="0 0 48 48"><path d="m16 39.513 15.556-15.557L16 8.4"/></svg>
<div id="toast" class="abs"><svg class="abs" style="left:10px;top:11px;width:20px;height:20px;color:#52c41a" viewBox="0 0 48 48"><path fill="currentColor" fill-rule="evenodd" d="M24 44c11.046 0 20-8.954 20-20S35.046 4 24 4 4 12.954 4 24s8.954 20 20 20Zm10.207-24.379a1 1 0 0 0 0-1.414l-1.414-1.414a1 1 0 0 0-1.414 0L22 26.172l-4.878-4.88a1 1 0 0 0-1.415 0l-1.414 1.415a1 1 0 0 0 0 1.414l7 7a1 1 0 0 0 1.414 0l11.500-11.500Z"/></svg><span class="abs" style="left:36px;top:9px;line-height:22px;white-space:nowrap">修改成功</span></div>
<div class="abs" id="footer" style="left:203px;top:1270px;width:2356px;text-align:center;line-height:22px;color:#86909c"><span style="letter-spacing:.6px">©2016-2025 </span>世外云系统</div>
</body>
</html>
